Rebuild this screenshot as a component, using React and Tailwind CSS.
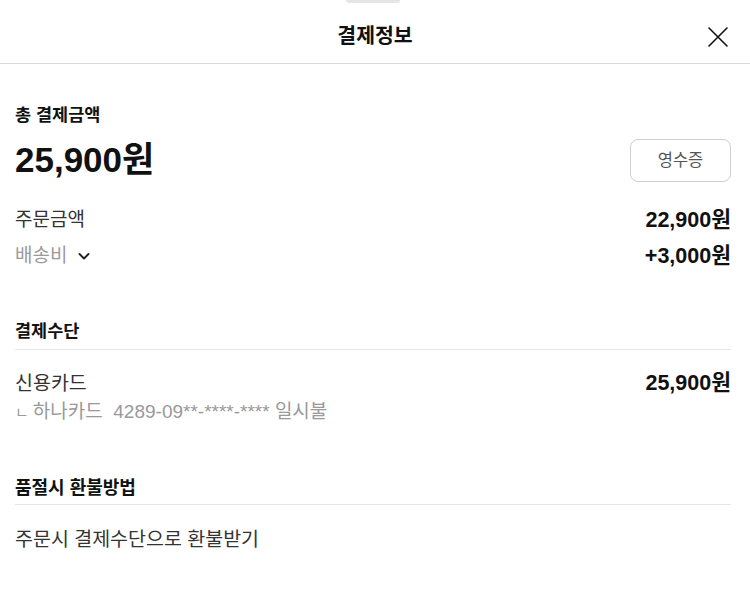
const FONT = "font-['Liberation_Sans','Noto_Sans_CJK_KR',sans-serif]";

function Row({ label, value, muted, chevron }) {
  return (
    <div className="flex items-center justify-between h-9">
      <div className={`flex items-center gap-[10px] text-[19px] ${muted ? 'text-[#9a9a9a]' : 'text-[#333]'}`}>
        {label}
        {chevron && (
          <svg width="14" height="14" viewBox="0 0 14 14" fill="none" stroke="#222" strokeWidth="1.9" strokeLinecap="round" strokeLinejoin="round">
            <path d="M2.5 5l4.5 4.5L11.5 5" />
          </svg>
        )}
      </div>
      <div className="text-[21.5px] font-bold text-[#111]">{value}</div>
    </div>
  );
}

export default function App() {
  return (
    <div className={`w-[750px] h-[614px] bg-white relative overflow-hidden ${FONT}`}>
      {/* drag handle */}
      <div className="absolute left-[346px] top-0 w-[54px] h-[3px] bg-[#e5e5e5] rounded-b" />

      {/* Header */}
      <div className="relative h-16 flex items-center justify-center border-b border-[#d6dbe2]">
        <h1 className="text-[20.5px] font-bold text-[#111] mt-[10px]">결제정보</h1>
        <button className="absolute right-[22px] top-[27px] w-5 h-5">
          <svg width="20" height="20" viewBox="0 0 20 20" fill="none" stroke="#111" strokeWidth="1.6" strokeLinecap="round">
            <path d="M1 1l18 18M19 1L1 19" />
          </svg>
        </button>
      </div>

      <div className="px-[15px] pr-[19px]">
        {/* Total */}
        <div className="pt-[39px]">
          <p className="text-[17.5px] font-bold text-[#111] leading-6">총 결제금액</p>
          <div className="flex items-center justify-between mt-[11px] h-11">
            <p className="text-[35px] font-bold text-[#111] leading-11">25,900원</p>
            <button className="w-[101px] h-[43px] rounded-lg border border-[#cfcfcf] text-[16.5px] text-[#555]">영수증</button>
          </div>
          <div className="mt-[20px]">
            <Row label="주문금액" value="22,900원" />
            <Row label="배송비" value="+3,000원" muted chevron />
          </div>
        </div>

        {/* Payment method */}
        <div className="mt-[45px]">
          <p className="text-[17.5px] font-bold text-[#111] leading-6 pb-[6px] border-b border-[#e6e6e6]">결제수단</p>
          <div className="pt-[19px] flex justify-between">
            <p className="text-[19.5px] text-[#333] leading-7">신용카드</p>
            <p className="text-[21.5px] font-bold text-[#111] leading-7">25,900원</p>
          </div>
          <p className="text-[19px] text-[#999] leading-6 mt-[3px] flex items-baseline">
            <span className="text-[15px] mr-[4px]">ㄴ</span>
            하나카드&nbsp; 4289-09**-****-**** 일시불
          </p>
        </div>

        {/* Refund */}
        <div className="mt-[51px]">
          <p className="text-[18px] font-bold text-[#111] leading-6 pb-[4px] border-b border-[#e6e6e6]">품절시 환불방법</p>
          <p className="pt-[20px] text-[19.5px] text-[#333] leading-7">주문시 결제수단으로 환불받기</p>
        </div>
      </div>
    </div>
  );
}
